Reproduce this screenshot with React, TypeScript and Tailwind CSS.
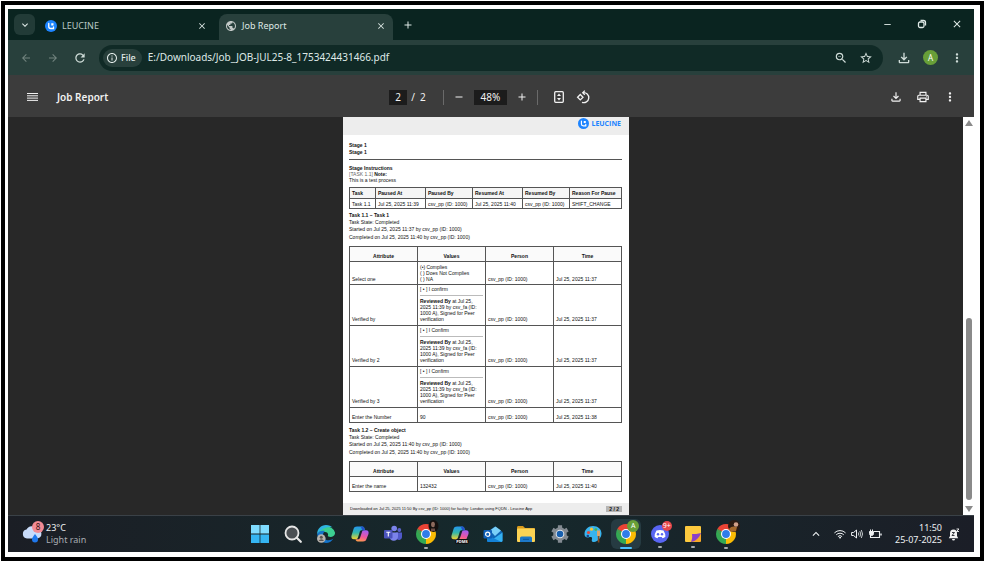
import { useState } from "react";
import type { ReactNode } from "react";
import {
  MdAdd,
  MdArrowBack,
  MdArrowForward,
  MdClose,
  MdInfoOutline,
  MdKeyboardArrowDown,
  MdKeyboardArrowUp,
  MdMoreVert,
  MdOutlineFileDownload,
  MdOutlinePrint,
  MdPublic,
  MdRefresh,
  MdRemove,
  MdStarBorder,
  MdZoomOut,
} from "react-icons/md";

const pauses = [
  {
    task: "Task 1.1",
    pausedAt: "Jul 25, 2025 11:39",
    pausedBy: "csv_pp (ID: 1000)",
    resumedAt: "Jul 25, 2025 11:40",
    resumedBy: "csv_pp (ID: 1000)",
    reason: "SHIFT_CHANGE",
  },
];

interface Entry {
  attribute: string;
  options?: string[];
  confirm?: string;
  value?: string;
  time: string;
}

const taskOne: Entry[] = [
  {
    attribute: "Select one",
    options: ["(•) Complies", "( ) Does Not Complies", "( ) NA"],
    time: "Jul 25, 2025 11:37",
  },
  { attribute: "Verified by", confirm: "I confirm", time: "Jul 25, 2025 11:37" },
  { attribute: "Verified by 2", confirm: "I Confirm", time: "Jul 25, 2025 11:37" },
  { attribute: "Verified by 3", confirm: "I Confirm", time: "Jul 25, 2025 11:37" },
  { attribute: "Enter the Number", value: "90", time: "Jul 25, 2025 11:38" },
];

const taskTwo: Entry[] = [
  { attribute: "Enter the name", value: "132432", time: "Jul 25, 2025 11:40" },
];

function IconButton({
  label,
  className = "",
  children,
}: {
  label: string;
  className?: string;
  children: ReactNode;
}) {
  return (
    <button
      type="button"
      aria-label={label}
      className={`flex shrink-0 items-center justify-center ${className}`}
    >
      {children}
    </button>
  );
}

function LeucineMark({ className }: { className?: string }) {
  return (
    <svg viewBox="0 0 24 24" className={className}>
      <circle cx="12" cy="12" r="12" fill="#1d84ff" />
      <path
        d="M7.500 7v6a4 4 0 0 0 4 4h5.500v-3"
        fill="none"
        stroke="#fff"
        strokeWidth="2.600"
        strokeLinecap="round"
      />
      <path d="M12.500 6.500H17V11h-4.500z" fill="#fff" />
    </svg>
  );
}

function TabStrip() {
  return (
    <div className="flex h-[31px] items-end bg-[#0a2420] text-[#dfe9e6]">
      <IconButton
        label="Search tabs"
        className="mb-[5px] ml-[6px] h-[21px] w-[21px] rounded-md bg-[#223b37]"
      >
        <MdKeyboardArrowDown className="h-3 w-3" />
      </IconButton>
      <div className="ml-[2px] flex h-[26px] w-[174px] items-center pr-1 pl-2 pb-[2px]">
        <LeucineMark className="h-3 w-3" />
        <span className="ml-[5px] flex-1 text-[9px] text-[#b9c8c4]">LEUCINE</span>
        <IconButton label="Close LEUCINE">
          <MdClose className="h-[10px] w-[10px]" />
        </IconButton>
      </div>
      <div className="ml-2 flex h-[26px] w-[174px] items-center rounded-t-lg bg-[#28403c] pr-[7px] pl-[6px] pb-[2px]">
        <MdPublic className="h-3 w-3 text-[#c3c9c7]" />
        <span className="ml-[5px] flex-1 text-[9px]">Job Report</span>
        <IconButton label="Close Job Report">
          <MdClose className="h-[10px] w-[10px]" />
        </IconButton>
      </div>
      <IconButton label="New tab" className="mb-[9px] ml-[9px]">
        <MdAdd className="h-3 w-3" />
      </IconButton>
      <div className="mb-[10px] ml-auto flex items-center gap-6 pr-[11px]">
        <IconButton label="Minimize">
          <MdRemove className="h-[11px] w-[11px]" />
        </IconButton>
        <IconButton label="Restore">
          <svg viewBox="0 0 10 10" className="h-[10px] w-[10px]" fill="none" stroke="currentColor" strokeWidth="1.300">
            <rect x="1.500" y="3" width="5.500" height="5.500" rx="1.500" />
            <path d="M3.500 1.500h3a2 2 0 0 1 2 2v3" />
          </svg>
        </IconButton>
        <IconButton label="Close window">
          <MdClose className="h-3 w-3" />
        </IconButton>
      </div>
    </div>
  );
}

function AddressBar() {
  const [url, setUrl] = useState("E:/Downloads/Job_JOB-JUL25-8_1753424431466.pdf");

  return (
    <div className="flex h-[35px] items-center bg-[#28403c] pr-[10px] pl-3 text-[#cfdcd8]">
      <IconButton label="Back" className="text-[#72837f]">
        <MdArrowBack className="h-3 w-3" />
      </IconButton>
      <IconButton label="Forward" className="ml-[15px] text-[#72837f]">
        <MdArrowForward className="h-3 w-3" />
      </IconButton>
      <IconButton label="Reload" className="ml-[14px]">
        <MdRefresh className="h-[14px] w-[14px]" />
      </IconButton>
      <div className="ml-3 flex h-[26px] flex-1 items-center rounded-full bg-[#102a26] pr-[10px] pl-1">
        <span className="flex h-[18px] items-center gap-[3px] rounded-full bg-[#28403c] pr-[6px] pl-[3px] text-[9px] font-medium text-[#e3ecea]">
          <MdInfoOutline className="h-3 w-3" />
          File
        </span>
        <input
          aria-label="Address"
          value={url}
          onChange={(e) => setUrl(e.target.value)}
          className="ml-[6px] min-w-0 flex-1 bg-transparent text-[10px] text-[#dfe9e6] outline-none"
        />
        <IconButton label="Zoom">
          <MdZoomOut className="h-[14px] w-[14px]" />
        </IconButton>
        <IconButton label="Bookmark this page" className="ml-[11px]">
          <MdStarBorder className="h-[14px] w-[14px]" />
        </IconButton>
      </div>
      <IconButton label="Downloads" className="ml-[13px]">
        <MdOutlineFileDownload className="h-4 w-4" />
      </IconButton>
      <IconButton
        label="Profile"
        className="ml-[11px] h-[15px] w-[15px] rounded-full bg-[#689f38] text-[8px] text-white"
      >
        A
      </IconButton>
      <IconButton label="Browser menu" className="ml-3">
        <MdMoreVert className="h-[14px] w-[14px]" />
      </IconButton>
    </div>
  );
}

function PdfToolbar() {
  const [page, setPage] = useState("2");
  const [zoom, setZoom] = useState("48%");

  return (
    <div className="flex h-[42px] items-center bg-[#3c3c3c] pt-[2px] text-[#f1f1f1]">
      <div className="flex flex-1 items-center pl-[19px]">
        <IconButton label="Toggle sidebar">
          <svg viewBox="0 0 11 10" className="h-[10px] w-[11px]" stroke="currentColor">
            <path d="M0 1.500h11M0 3.800h11M0 6.100h11M0 8.400h11" />
          </svg>
        </IconButton>
        <h1 className="ml-[19px] text-[10px] font-semibold">Job Report</h1>
      </div>
      <div className="mr-[5px] flex items-center text-[10px]">
        <input
          aria-label="Page"
          value={page}
          onChange={(e) => setPage(e.target.value)}
          className="h-[15px] w-[18px] bg-[#1c1c1c] text-center outline-none"
        />
        <span className="ml-1">/&nbsp; 2</span>
        <span className="ml-[17px] h-[15px] w-px bg-[#6a6a6a]" />
        <IconButton label="Zoom out" className="ml-[9px]">
          <MdRemove className="h-3 w-3" />
        </IconButton>
        <input
          aria-label="Zoom level"
          value={zoom}
          onChange={(e) => setZoom(e.target.value)}
          className="ml-[9px] h-[15px] w-[33px] bg-[#1c1c1c] text-center outline-none"
        />
        <IconButton label="Zoom in" className="ml-[9px]">
          <MdAdd className="h-3 w-3" />
        </IconButton>
        <span className="ml-[9px] h-[15px] w-px bg-[#6a6a6a]" />
        <IconButton label="Fit to page" className="ml-4">
          <svg viewBox="0 0 10 12" className="h-3 w-[10px]">
            <rect x="0.700" y="0.700" width="8.600" height="10.600" rx="1" fill="none" stroke="currentColor" strokeWidth="1.300" />
            <path d="M5 2.600 7 5H3zM5 9.400 7 7H3z" fill="currentColor" />
          </svg>
        </IconButton>
        <IconButton label="Rotate counterclockwise" className="ml-3">
          <svg viewBox="0 0 14 14" className="h-[14px] w-[14px]" fill="none" stroke="currentColor" strokeWidth="1.300">
            <path d="M4.300 4.500 7 7.200 4.300 9.900 1.600 7.200z" />
            <path d="M7 2.700a5 5 0 1 1-1 9.600" />
            <path d="M8.800.600 6.700 2.700l2.100 2.100" />
          </svg>
        </IconButton>
      </div>
      <div className="flex flex-1 items-center justify-end gap-[13px] pr-[17px]">
        <IconButton label="Download">
          <MdOutlineFileDownload className="h-[14px] w-[14px]" />
        </IconButton>
        <IconButton label="Print">
          <MdOutlinePrint className="h-[14px] w-[14px]" />
        </IconButton>
        <IconButton label="More actions">
          <MdMoreVert className="h-[14px] w-[14px]" />
        </IconButton>
      </div>
    </div>
  );
}

const cell = "border border-[#555] px-[2px]";

function PauseTable() {
  return (
    <table className="mt-1 w-full table-fixed border-collapse text-left whitespace-nowrap">
      <colgroup>
        <col className="w-[26px]" />
        <col className="w-[50px]" />
        <col className="w-[47px]" />
        <col className="w-[50px]" />
        <col className="w-[47px]" />
        <col />
      </colgroup>
      <thead className="bg-[#f5f5f5]">
        <tr>
          {["Task", "Paused At", "Paused By", "Resumed At", "Resumed By", "Reason For Pause"].map(
            (name) => (
              <th key={name} className={`${cell} py-[2px]`}>
                {name}
              </th>
            ),
          )}
        </tr>
      </thead>
      <tbody>
        {pauses.map((p) => (
          <tr key={p.task}>
            {[p.task, p.pausedAt, p.pausedBy, p.resumedAt, p.resumedBy, p.reason].map((text, i) => (
              <td key={i} className={`${cell} pt-[2px] pb-px`}>
                {text}
              </td>
            ))}
          </tr>
        ))}
      </tbody>
    </table>
  );
}

function EntryValue({ entry }: { entry: Entry }) {
  if (entry.options) {
    return entry.options.map((o) => <p key={o}>{o}</p>);
  }
  if (entry.confirm) {
    return (
      <>
        <p>[ • ] {entry.confirm}</p>
        <p className="mt-[3px] border-t border-[#bbb] pt-[2px]">
          <b>Reviewed By</b> at Jul 25,
          <br />
          2025 11:39 by csv_fa (ID:
          <br />
          1000 A), Signed for Peer
          <br />
          verification
        </p>
      </>
    );
  }
  return entry.value;
}

function TaskTable({ entries }: { entries: Entry[] }) {
  return (
    <table className="mt-[5px] w-full table-fixed border-collapse whitespace-nowrap">
      <thead className="bg-[#fafafa]">
        <tr>
          {["Attribute", "Values", "Person", "Time"].map((name) => (
            <th key={name} className={`${cell} pt-[6px] pb-[2px]`}>
              {name}
            </th>
          ))}
        </tr>
      </thead>
      <tbody className="align-bottom">
        {entries.map((entry) => {
          const pad = entry.options ? "py-[2px]" : entry.confirm ? "pt-px pb-[3px]" : "pt-[6px] pb-[2px]";
          return (
            <tr key={entry.attribute}>
              <td className={`${cell} ${pad}`}>{entry.attribute}</td>
              <td className={`${cell} ${pad}`}>
                <EntryValue entry={entry} />
              </td>
              <td className={`${cell} ${pad}`}>csv_pp (ID: 1000)</td>
              <td className={`${cell} ${pad}`}>{entry.time}</td>
            </tr>
          );
        })}
      </tbody>
    </table>
  );
}

function TaskSummary({ title, started, completed }: { title: string; started: string; completed: string }) {
  return (
    <>
      <h3 className="leading-[7px] font-bold">{title}</h3>
      <p>Task State: Completed</p>
      <p className="leading-[8px]">Started on {started} by csv_pp (ID: 1000)</p>
      <p className="leading-[8px]">Completed on {completed} by csv_pp (ID: 1000)</p>
    </>
  );
}

function ReportPage() {
  return (
    <article className="flex w-[286px] flex-col bg-white font-['Liberation_Sans',sans-serif] text-[5px] leading-[6px] text-[#111]">
      <header className="flex h-[18px] items-start justify-end gap-[2px] bg-[#ededed] pt-px pr-2 text-[#1d84ff]">
        <LeucineMark className="h-[11px] w-[11px]" />
        <span className="font-['Open_Sans',sans-serif] text-[7px] leading-[11px] font-bold">LEUCINE</span>
      </header>
      <div className="pt-[7px] pr-[7px] pl-[6px]">
        <h2 className="leading-[7px] font-bold">Stage 1</h2>
        <p className="border-b border-[#555] pb-[3px] leading-[7px] font-bold">Stage 1</p>
        <p className="mt-[5px] font-bold">Stage Instructions</p>
        <p>
          <span className="text-[#666]">[TASK 1.1]</span> <b>Note:</b>
        </p>
        <p>This is a test process</p>
        <PauseTable />
        <section className="mt-[3px]">
          <TaskSummary title="Task 1.1 – Task 1" started="Jul 25, 2025 11:37" completed="Jul 25, 2025 11:40" />
          <TaskTable entries={taskOne} />
        </section>
        <section className="mt-1">
          <TaskSummary title="Task 1.2 – Create object" started="Jul 25, 2025 11:40" completed="Jul 25, 2025 11:40" />
          <TaskTable entries={taskTwo} />
        </section>
      </div>
      <footer className="mt-auto flex h-3 items-center justify-between bg-[#ededed] px-[7px] text-[4px]">
        <span>Downloaded on Jul 25, 2025 11:50 By csv_pp (ID: 1000) for facility: London using FQDN - Leucine App</span>
        <span className="bg-[#b5b5b5] px-[3px] text-[5px] font-bold">2 / 2</span>
      </footer>
    </article>
  );
}

function Viewer() {
  return (
    <main className="flex min-h-[398px] flex-1 bg-[#282828]">
      <div className="flex flex-1 justify-center pl-[1px]">
        <ReportPage />
      </div>
      <div className="flex w-[11px] flex-col items-center bg-white py-[3px]">
        <svg viewBox="0 0 8 6" className="h-[6px] w-2" fill="#8a8a8a">
          <path d="M4 0 8 6H0z" />
        </svg>
        <span className="mt-auto mb-[6px] h-[182px] w-[6px] rounded-full bg-[#8a8a8a]" />
        <svg viewBox="0 0 8 6" className="h-[6px] w-2" fill="#8a8a8a">
          <path d="M4 6 8 0H0z" />
        </svg>
      </div>
    </main>
  );
}

function ChromeLogo() {
  return (
    <svg viewBox="0 0 24 24" className="h-5 w-5">
      <path d="M12 12 1.610 6A12 12 0 0 1 22.390 6z" fill="#ea4335" />
      <path d="M12 12 22.390 6A12 12 0 0 1 12 24z" fill="#fbbc04" />
      <path d="M12 12v12A12 12 0 0 1 1.610 6z" fill="#34a853" />
      <path d="M12 6h10.390L12 12zM6.800 15 1.610 6 12 12z" fill="#ea4335" />
      <path d="M17.200 15 12 24V12z" fill="#fbbc04" />
      <path d="M1.610 6 6.800 15 12 24 12 12z" fill="#34a853" />
      <circle cx="12" cy="12" r="6" fill="#fff" />
      <circle cx="12" cy="12" r="4.700" fill="#2f7de9" />
    </svg>
  );
}

function CopilotLogo({ id }: { id: string }) {
  return (
    <svg viewBox="0 0 24 24" className="h-[18px] w-[18px]">
      <defs>
        <linearGradient id={`${id}-l`} x1="0" y1="0" x2="0" y2="1">
          <stop offset="0" stopColor="#2496ed" />
          <stop offset="0.500" stopColor="#35b8a8" />
          <stop offset="1" stopColor="#f4d32f" />
        </linearGradient>
        <linearGradient id={`${id}-r`} x1="0.600" y1="0" x2="0.300" y2="1">
          <stop offset="0" stopColor="#a45cf0" />
          <stop offset="0.550" stopColor="#f0569b" />
          <stop offset="1" stopColor="#ff9c4a" />
        </linearGradient>
      </defs>
      <path d="M8 2h7c2 0 2.600 1.300 3 3l.600 2H14c-1.500 0-2 1-2.500 2.500L9.500 16C9 18 8 19 6 19H4c-3 0-4-2-3.300-5L3.500 5C4.200 3 5.500 2 8 2z" fill={`url(#${id}-l)`} />
      <path d="M16 22H9c-2 0-2.600-1.300-3-3h3.500c1.500 0 2.200-1 2.700-2.500l2.300-7C15 8 16 7 18 7h2c3 0 4 2 3.300 5l-2.800 7c-.700 2-2 3-4.500 3z" fill={`url(#${id}-r)`} />
      <path d="M15 2c2 0 2.600 1.300 3 3l.600 2H15l-2-5z" fill="#2350c8" />
    </svg>
  );
}

const underline = "absolute -bottom-[5px] left-1/2 h-[2px] -translate-x-1/2 rounded-full";

const taskbarApps: { name: string; icon: ReactNode; running?: boolean; active?: boolean }[] = [
  {
    name: "Start",
    icon: (
      <svg viewBox="0 0 18 18" className="h-[18px] w-[18px]">
        <path d="M0 0h8.600v8.600H0zM9.400 0H18v8.600H9.400z" fill="#7fdcff" />
        <path d="M0 9.400h8.600V18H0zM9.400 9.400H18V18H9.400z" fill="#35b5f2" />
      </svg>
    ),
  },
  {
    name: "Search",
    icon: (
      <svg viewBox="0 0 18 18" className="h-[18px] w-[18px]">
        <circle cx="8" cy="8" r="6.500" fill="#4a4f53" stroke="#e6e6e6" strokeWidth="1.800" />
        <path d="m12.800 12.800 4 4" stroke="#e6e6e6" strokeWidth="2.200" strokeLinecap="round" />
      </svg>
    ),
  },
  {
    name: "Edge",
    icon: (
      <svg viewBox="0 0 18 18" className="h-[18px] w-[18px]">
        <path d="M.500 9A9 9 0 0 1 18 7.500c.300 3-2 4.500-4.500 4.500-2 0-3-.700-2.600-1.500.700-1.400-.300-3.500-2.900-3.500C4 7 2 9 .500 9z" fill="#3ccf91" />
        <path d="M.200 9C0 4 4 0 9 0c3 0 5 1 6.500 2.500C11 1 5 3 .200 9z" fill="#2fb5e0" />
        <path d="M.200 9C1.500 6 5 5 8 6c-3 2-2.500 7 1 8.700 2.500 1.100 5.500.300 7.500-1.200C14.500 16.800 12 18 9 18a9 9 0 0 1-8.800-9z" fill="#1473c9" />
        <circle cx="4.300" cy="13.500" r="4.300" fill="#b9b4ae" />
        <circle cx="4.300" cy="12.300" r="1.500" fill="#5c5550" />
        <path d="M1.700 16a2.700 2.400 0 0 1 5.200 0z" fill="#5c5550" />
      </svg>
    ),
  },
  { name: "Copilot", icon: <CopilotLogo id="copilot" /> },
  {
    name: "Teams",
    icon: (
      <svg viewBox="0 0 18 18" className="h-[18px] w-[18px]">
        <circle cx="15.300" cy="5" r="1.900" fill="#5b62c9" />
        <circle cx="10.200" cy="3.500" r="2.800" fill="#7b83eb" />
        <path d="M12 7.500h6v4.800a3 3 0 0 1-5 2z" fill="#5059c9" />
        <path d="M5.500 7.500H14V12a4.300 4.300 0 0 1-8.500 0z" fill="#7b83eb" />
        <rect y="5" width="8.500" height="8.500" rx="1" fill="#4b53bc" />
        <path d="M2.300 7.200h4M4.300 7.200v4.400" stroke="#fff" strokeWidth="1.100" />
      </svg>
    ),
  },
  {
    name: "Chrome, first profile",
    running: true,
    icon: (
      <>
        <ChromeLogo />
        <svg viewBox="0 0 10 12" className="absolute -top-1 -right-[3px] h-3 w-[11px]">
          <ellipse cx="5" cy="6" rx="5" ry="6" fill="#14100f" />
          <ellipse cx="4.500" cy="4.500" rx="1.900" ry="2.800" fill="#8d6a5d" />
          <path d="M2.500 11V8.500h4V11z" fill="#6d4d45" />
        </svg>
      </>
    ),
  },
  {
    name: "Copilot PWA",
    icon: (
      <>
        <CopilotLogo id="copilot-pwa" />
        <span className="absolute right-0 -bottom-px rounded-sm bg-[#111] px-px text-[4px] leading-[5px] font-bold text-white">
          PDMS
        </span>
      </>
    ),
  },
  {
    name: "Outlook",
    icon: (
      <svg viewBox="0 0 20 18" className="h-[18px] w-5">
        <path d="M4 7 12 1.500 19.500 7v8.500A1.500 1.500 0 0 1 18 17H5.500A1.500 1.500 0 0 1 4 15.500z" fill="#1066b5" />
        <path d="m7 5.500 5.500-4L18 5.500 12 11z" fill="#7ad0f8" />
        <path d="M19.500 7.500v8A1.500 1.500 0 0 1 18 17H6z" fill="#35b1f1" />
        <path d="M4 10l14.500 6.900-.500.100H5.500A1.500 1.500 0 0 1 4 15.500z" fill="#1482d8" />
        <rect x="0.500" y="5" width="8.500" height="8.500" rx="1" fill="#0f5fb8" />
        <circle cx="4.700" cy="9.200" r="2.100" fill="none" stroke="#fff" strokeWidth="1.200" />
      </svg>
    ),
  },
  {
    name: "File Explorer",
    icon: (
      <svg viewBox="0 0 20 18" className="h-[18px] w-5">
        <path d="M1 2.500C1 1.700 1.500 1 2.500 1H7l2 2h9c.700 0 1 .500 1 1.200V8H1z" fill="#d99a1c" />
        <rect x="1" y="3.500" width="18" height="13.500" rx="1" fill="#fcd354" />
        <path d="M4 17v-4a1.500 1.500 0 0 1 1.500-1.500h9A1.500 1.500 0 0 1 16 13v4z" fill="#1d78c8" />
        <path d="M7 14.300h6" stroke="#0f559a" />
      </svg>
    ),
  },
  {
    name: "Settings",
    icon: (
      <svg viewBox="0 0 18 18" className="h-[18px] w-[18px]">
        <path
          d="M9 .200v17.600M1.400 4.600l15.200 8.800M16.600 4.600 1.400 13.400"
          stroke="#848b92"
          strokeWidth="4.200"
        />
        <circle cx="9" cy="9" r="6.800" fill="#848b92" />
        <circle cx="9" cy="9" r="4.300" fill="#e3e8ec" />
        <circle cx="9" cy="9" r="3.300" fill="#175fae" />
      </svg>
    ),
  },
  {
    name: "Paint",
    icon: (
      <svg viewBox="0 0 18 18" className="h-[18px] w-[18px]">
        <path d="M9 1c5 0 8.500 3.400 8.500 7.500S14 16.500 10 17c-2.500.300-2.500-1.500-2-3 .500-1.700-1-2.300-3-1.700C2 13 .500 11.500.500 9 .500 4.500 4.500 1 9 1z" fill="#38b4ee" />
        <circle cx="4.500" cy="7.500" r="1.600" fill="#e5493a" />
        <circle cx="7.500" cy="4.200" r="1.600" fill="#f6c33c" />
        <circle cx="3.800" cy="11" r="1.300" fill="#1b3f88" />
        <circle cx="11.800" cy="4.600" r="1.400" fill="#48b65a" />
        <path d="M13 5.500h3v5.500h-3z" fill="#d9a66e" />
        <path d="M13.800 11h1.600v6.500h-1.600z" fill="#8a4b20" />
      </svg>
    ),
  },
  {
    name: "Chrome, work profile",
    active: true,
    icon: (
      <>
        <ChromeLogo />
        <span className="absolute -top-1 -right-[3px] flex h-3 w-3 items-center justify-center rounded-full bg-[#689f38] text-[7px] text-white">
          A
        </span>
      </>
    ),
  },
  {
    name: "Discord",
    running: true,
    icon: (
      <>
        <svg viewBox="0 0 18 18" className="h-[18px] w-[18px]">
          <circle cx="9" cy="9" r="9" fill="#5865f2" />
          <path d="M5.500 5.600Q9 4.400 12.500 5.600q2 3 1.900 6.200Q13 13 11.500 13.200l-.800-1.200H7.300l-.800 1.200Q5 13 3.600 11.800 3.500 8.600 5.500 5.600z" fill="#fff" />
          <circle cx="7" cy="9.300" r="1.200" fill="#5865f2" />
          <circle cx="11" cy="9.300" r="1.200" fill="#5865f2" />
        </svg>
        <span className="absolute -top-1 -right-[3px] flex h-[10px] w-[10px] items-center justify-center rounded-full bg-[#e5484d] text-[7px] text-white">
          9+
        </span>
      </>
    ),
  },
  {
    name: "Sticky Notes",
    running: true,
    icon: (
      <svg viewBox="0 0 18 18" className="h-[18px] w-[18px]">
        <path d="M2 1h14a1 1 0 0 1 1 1v7l-8 8H2a1 1 0 0 1-1-1V2a1 1 0 0 1 1-1z" fill="#fdc93e" />
        <path d="M17 8v8a1 1 0 0 1-1 1H7z" fill="#f7a928" />
        <path d="M17 8c-3 1-7 1-9 1 .500 3 0 6-1 8 5-1 8-4 10-9z" fill="#8b3fc9" />
      </svg>
    ),
  },
  {
    name: "Chrome, personal profile",
    running: true,
    icon: (
      <>
        <ChromeLogo />
        <svg viewBox="0 0 12 12" className="absolute -top-1 -right-1 h-3 w-3">
          <circle cx="6" cy="6" r="6" fill="#2c1a12" />
          <path d="M1 9c2-3 5-3 8-2l-1 4C5 12 2 12 1 9z" fill="#a5682c" />
          <circle cx="8" cy="4.500" r="2.300" fill="#d2a08a" />
        </svg>
      </>
    ),
  },
];

function Taskbar() {
  return (
    <footer className="flex h-[37px] items-center border-t border-[#3a4147] bg-linear-to-r from-[#1b1e25] via-[#15292c] to-[#1b1e27] text-[9px] leading-3 text-[#eef1f3]">
      <div className="flex flex-1 items-center pl-[14px]">
        <div className="relative">
          <svg viewBox="0 0 20 18" className="h-[18px] w-5">
            <path d="M5 13.500a4.500 4.500 0 0 1-.500-8.900A6 6 0 0 1 15 4a4.800 4.800 0 0 1 .500 9.500z" fill="#c9dcfa" />
            <path d="M13 9c2 2.500 3 4 3 5.500a3 3 0 0 1-6 0c0-1.500 1-3 3-5.500z" fill="#1f78ec" />
          </svg>
          <span className="absolute -top-1 -right-[2px] flex h-3 w-3 items-center justify-center rounded-full bg-[#f28b94] text-[8px] text-[#3a1418]">
            8
          </span>
        </div>
        <div className="ml-1">
          <p>23°C</p>
          <p className="text-[#a9adb3]">Light rain</p>
        </div>
      </div>
      <nav aria-label="Taskbar" className="ml-1 grid w-[500px] grid-cols-15">
        {taskbarApps.map((app) => (
          <button
            key={app.name}
            type="button"
            aria-label={app.name}
            className={`mx-auto flex h-[30px] w-[30px] items-center justify-center rounded-md ${
              app.active ? "bg-[#263b42]" : ""
            }`}
          >
            <span className="relative">
              {app.icon}
              {app.running && <span className={`${underline} w-1 bg-[#a8adb0]`} />}
              {app.active && <span className={`${underline} w-3 bg-[#4cc2ff]`} />}
            </span>
          </button>
        ))}
      </nav>
      <div className="flex flex-1 items-center justify-end pr-[14px]">
        <IconButton label="Show hidden icons">
          <MdKeyboardArrowUp className="h-[14px] w-[14px]" />
        </IconButton>
        <svg viewBox="0 0 12 10" className="ml-[11px] h-[10px] w-3" fill="none" stroke="currentColor" strokeLinecap="round">
          <path d="M.700 3.600a7.500 7.500 0 0 1 10.600 0M2.500 5.500a5 5 0 0 1 7 0M4.200 7.300a2.600 2.600 0 0 1 3.600 0" />
          <circle cx="6" cy="8.700" r="0.500" fill="currentColor" />
        </svg>
        <svg viewBox="0 0 12 10" className="ml-[5px] h-[10px] w-3" fill="none" stroke="currentColor" strokeLinejoin="round">
          <path d="M.600 3.500h2L5.500 1v8L2.600 6.500h-2z" />
          <path d="M7.300 3.500q1 1.500 0 3M8.800 2.200q2 2.800 0 5.600M10.300 1q2.600 4 0 8" strokeWidth="0.800" />
        </svg>
        <svg viewBox="0 0 13 10" className="ml-[6px] h-[10px] w-[13px]" fill="none" stroke="currentColor">
          <path d="M5 2.500h5.500v6h-9V6" strokeWidth="1.100" />
          <path d="M12 4.500v2" strokeWidth="1.400" />
          <path d="M.500 2.500h4v2a2 2 0 0 1-4 0zM1.500 2.500v-2M3.500 2.500v-2" fill="currentColor" />
        </svg>
        <div className="ml-[13px] text-right">
          <p>11:50</p>
          <p>25-07-2025</p>
        </div>
        <IconButton label="Notifications" className="ml-[6px]">
          <svg viewBox="0 0 12 13" className="h-[13px] w-3">
            <path d="M5.500 1.500A3.700 3.700 0 0 0 2 5.200V8L.800 10.300h9.400L9 8V5.200A3.700 3.700 0 0 0 5.500 1.500zM4 11h3a1.500 1.500 0 0 1-3 0z" fill="#f2f2f2" />
            <path d="M4 4.500h2.500L4 7.500h2.500" fill="none" stroke="#22262d" strokeWidth="0.900" />
            <path d="M8.500 1h2.500L8.500 3.500H11" fill="none" stroke="#f2f2f2" strokeWidth="0.900" />
          </svg>
        </IconButton>
      </div>
    </footer>
  );
}

export default function App() {
  return (
    <div className="flex min-h-screen bg-white p-px font-['Noto_Sans','Open_Sans',sans-serif]">
      <div className="flex flex-1 flex-col border-4 border-black pt-1 pr-[6px] pb-[5px] pl-[3px]">
        <TabStrip />
        <AddressBar />
        <PdfToolbar />
        <Viewer />
        <Taskbar />
      </div>
    </div>
  );
}
